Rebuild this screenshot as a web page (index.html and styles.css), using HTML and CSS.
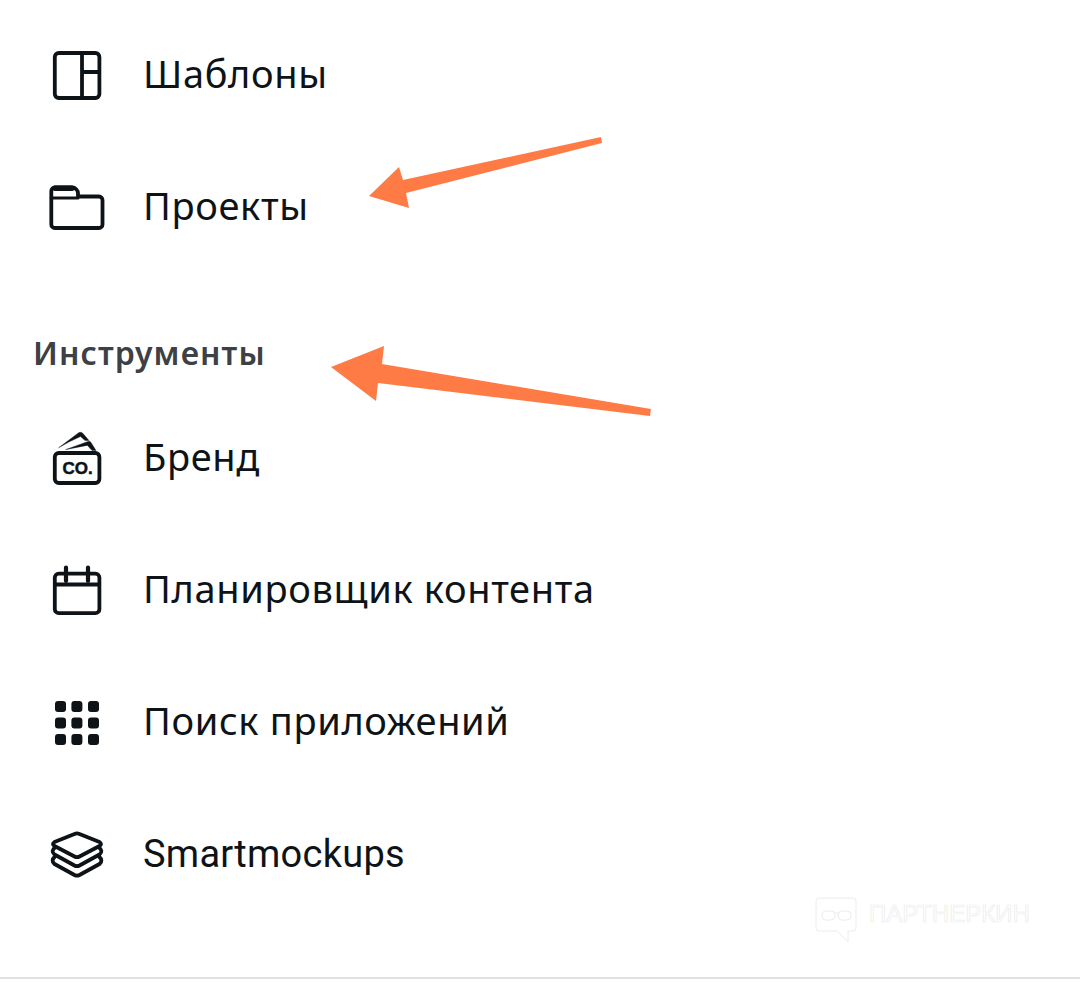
FILE: index.html
```html
<!DOCTYPE html>
<html lang="ru">
<head>
    <meta charset="UTF-8">
    <meta name="viewport" content="width=device-width, initial-scale=1.0">
    <title>Меню</title>
    <link rel="stylesheet" href="styles.css">
</head>
<body>
    <div class="menu">
        <div class="menu-row">
            <svg class="icon" viewBox="0 0 60 60">
                <rect x="7.8" y="8" width="44.6" height="45" rx="4"/>
                <path d="M35 8V53M35 27H52"/>
            </svg>
            <span>Шаблоны</span>
        </div>
        <div class="menu-row">
            <svg class="icon" viewBox="0 0 60 60">
                <path d="M4.3 20V14a3.5 3.5 0 0 1 3.5-3.5H25a6 6 0 0 1 6 6v3H52a3.5 3.5 0 0 1 3.5 3.5V47.5a3.5 3.5 0 0 1-3.5 3.5H7.8a3.5 3.5 0 0 1-3.5-3.5Z"/>
                <path d="M4.3 21H31" class="thin"/>
                <path d="M8 11.2H25" class="thick"/>
            </svg>
            <span>Проекты</span>
        </div>

        <div class="menu-title">Инструменты</div>

        <div class="menu-row">
            <svg class="icon" viewBox="0 0 60 60">
                <rect x="7.8" y="25" width="44.6" height="30" rx="4"/>
                <path d="M12 19.5L32 4.5Q34 3.5 36 5.5L42 12.5L38 12.5L33.5 8.5Q23 13 12 19.5Z" class="paper"/>
                <path d="M19 21.5L41 13.5Q43 12.5 44 14.5L49 22.5H45L40.5 17.5Z" class="paper"/>
                <text x="30.5" y="45.5" class="co">CO.</text>
            </svg>
            <span>Бренд</span>
        </div>
        <div class="menu-row">
            <svg class="icon" viewBox="0 0 60 60">
                <rect x="7.8" y="13.6" width="44.6" height="39.6" rx="4"/>
                <path d="M8 24.5H52"/>
                <path d="M19 7.5V21M41 7.5V21" class="pin"/>
            </svg>
            <span>Планировщик контента</span>
        </div>
        <div class="menu-row">
            <svg class="icon dots" viewBox="0 0 60 60">
                <rect x="8" y="9" width="11" height="11" rx="3"/>
                <rect x="24.4" y="9" width="11" height="11" rx="3"/>
                <rect x="41" y="9" width="11" height="11" rx="3"/>
                <rect x="8" y="25.5" width="11" height="11" rx="3"/>
                <rect x="24.4" y="25.5" width="11" height="11" rx="3"/>
                <rect x="41" y="25.5" width="11" height="11" rx="3"/>
                <rect x="8" y="42" width="11" height="11" rx="3"/>
                <rect x="24.4" y="42" width="11" height="11" rx="3"/>
                <rect x="41" y="42" width="11" height="11" rx="3"/>
            </svg>
            <span>Поиск приложений</span>
        </div>
        <div class="menu-row">
            <svg class="icon" viewBox="0 0 60 60">
                <path d="M27.5 10Q30 8.8 32.5 10L52.5 18Q55.5 20 52.5 22L32.5 32.5Q30 33.8 27.5 32.5L7.5 22Q4.5 20 7.5 18Z"/>
                <path d="M8 23.5Q3.5 27 7.5 30.5L27.5 41.5Q30 42.8 32.5 41.5L52.5 30.5Q56.5 27 52 23.5"/>
                <path d="M8 32.5Q3.5 36.5 7.5 40L27.5 51Q30 52.3 32.5 51L52.5 40Q56.5 36.5 52 32.5"/>
            </svg>
            <span class="latin">Smartmockups</span>
        </div>
    </div>
    <div class="divider"></div>

    <!-- arrows drawn over the screenshot -->
    <svg class="arrows" viewBox="0 0 1080 994">
        <polygon points="369,196 399,167 403,180 601,137 602,143 406,193 409,208"/>
        <polygon points="331,367 384,346 382,364 651,409 650,416 378,383 376,401"/>
    </svg>

    <div class="watermark">
        <svg class="watermark-icon" viewBox="0 0 44 48">
            <path d="M4 2H38Q41 2 41 5V32Q41 35 38 35H33V46L22 35H4Q1 35 1 32V5Q1 2 4 2Z"/>
            <rect x="7" y="15" width="13" height="9" rx="4"/>
            <rect x="23" y="15" width="13" height="9" rx="4"/>
            <path d="M20 17H23"/>
        </svg>
        <span>ПАРТНЕРКИН</span>
    </div>
</body>
</html>
```

FILE: styles.css
```css
body{
    margin: 0;
    background-color: white;
    font-family: "Noto Sans", sans-serif;
    color: #0e1318;
}

.menu{
    padding-top: 9px;
}

.menu-row{
    display: flex;
    align-items: center;
    gap: 36px;
    height: 132px;
    padding-left: 47px;
    font-size: 38px;
    letter-spacing: 0.65px;
}

.menu-row span{
    margin-bottom: 4px;
}

.menu-row .latin{
    margin-bottom: 0;
    font-family: Roboto, sans-serif;
    letter-spacing: 0.25px;
}

.icon{
    width: 60px;
    height: 60px;
    flex-shrink: 0;
    fill: none;
    stroke: #0e1318;
    stroke-width: 3.8;
    stroke-linecap: round;
    stroke-linejoin: round;
}

.icon .thin{
    stroke-width: 3;
}

.icon .thick{
    stroke-width: 5.5;
}

.icon .pin{
    stroke-width: 4.2;
}

.icon .paper{
    fill: #0e1318;
    stroke-width: 0.4;
}

.icon .co{
    fill: #0e1318;
    stroke: #0e1318;
    stroke-width: 0.5;
    font-family: "Liberation Sans", sans-serif;
    font-size: 17px;
    font-weight: bold;
    letter-spacing: 0;
    text-anchor: middle;
}

.dots rect{
    fill: #0e1318;
    stroke: none;
}

.menu-title{
    padding: 60px 0 19px 33px;
    height: 40px;
    line-height: 40px;
    font-size: 32px;
    font-weight: 600;
    letter-spacing: 1.1px;
    color: #3d4045;
}

.divider{
    height: 2px;
    margin-top: 57px;
    background-color: #dfe1e4;
}

.arrows{
    position: absolute;
    left: 0;
    top: 0;
    width: 1080px;
    height: 994px;
    fill: #ff7b45;
    pointer-events: none;
}

.watermark{
    position: absolute;
    left: 815px;
    top: 896px;
    display: flex;
    gap: 10px;
    font-family: "Liberation Sans", sans-serif;
    font-size: 24px;
    line-height: 36px;
    color: white;
    -webkit-text-stroke: 0.7px #ececec;
}

.watermark-icon{
    width: 44px;
    height: 48px;
    fill: none;
    stroke: #ececec;
    stroke-width: 1;
}
```
